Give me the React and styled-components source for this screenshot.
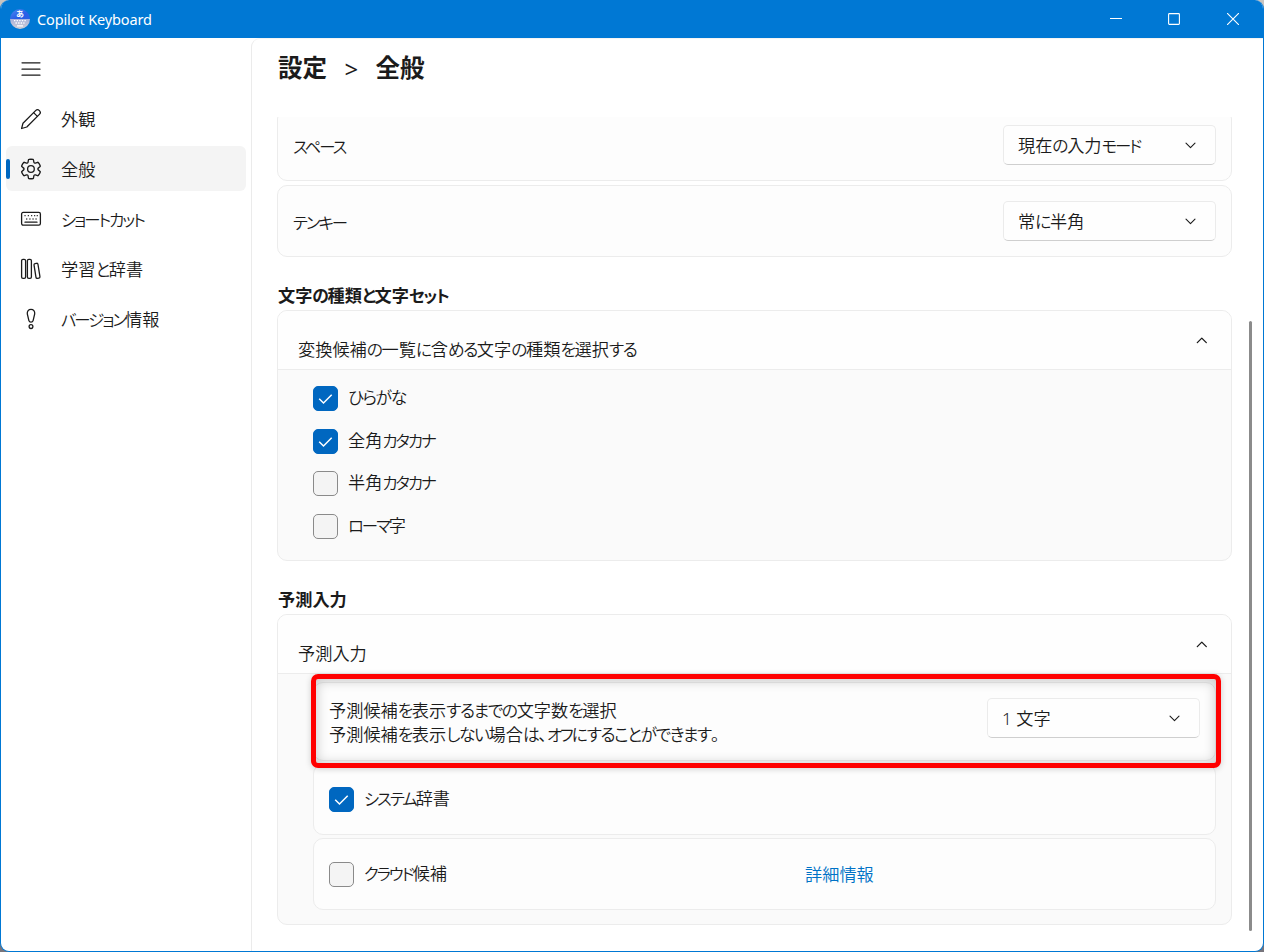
import React, { useState } from 'react';
import styled, { createGlobalStyle } from 'styled-components';

const GlobalStyle = createGlobalStyle`
  * {
    box-sizing: border-box;
  }

  body {
    margin: 0;
    background: linear-gradient(#c8c4c0 0%, #c8c4c0 50%, #5c5a78 50%, #77757c 100%);
    font-family: 'Noto Sans', 'Noto Sans CJK JP', sans-serif;
    color: #1b1b1b;
  }
`;

// --- WINDOW ---

const Window = styled.div`
  display: flex;
  flex-direction: column;
  width: 1264px;
  height: 952px;
  border: 1px solid #0078d4;
  border-top: none;
  border-radius: 9px;
  background: #fff;
  overflow: hidden;
`;

const TitleBar = styled.header`
  display: flex;
  align-items: center;
  flex: 0 0 38px;
  padding: 0 1px 0 8px;
  background: #0078d4;
  color: #fff;
`;

const AppTitle = styled.span`
  flex: 1;
  margin-left: 6px;
  font-family: 'Noto Sans', sans-serif;
  font-size: 14.5px;
  letter-spacing: -0.12px;
`;

const WindowButton = styled.button`
  display: flex;
  justify-content: center;
  align-items: center;
  width: 58.5px;
  height: 38px;
  padding: 0;
  border: none;
  background: none;
  color: #fff;
`;

const Body = styled.div`
  display: flex;
  flex: 1;
  min-height: 0;
`;

// --- SIDEBAR ---

const Sidebar = styled.nav`
  display: flex;
  flex-direction: column;
  gap: 5px;
  width: 250px;
  padding: 8px 5px 0;
`;

const NavItem = styled.div`
  display: flex;
  align-items: center;
  height: 45px;
  border-radius: 6px;
  background: ${props => (props.$active ? '#f4f4f4' : 'transparent')};
  cursor: pointer;

  &::before {
    content: '';
    width: 4px;
    height: 20px;
    border-radius: 2px;
    background: ${props => (props.$active ? '#0067c0' : 'transparent')};
  }
`;

const NavIcon = styled.span`
  display: flex;
  width: 22px;
  height: 22px;
  margin: 0 19px 0 10px;
`;

// --- CONTENT ---

const Main = styled.main`
  display: flex;
  flex-direction: column;
  flex: 1;
  padding-left: 25px;
  border-left: 1px solid #ebebeb;
  border-top: 1px solid #f4f4f4;
  border-top-left-radius: 9px;
`;

const Heading = styled.h1`
  display: flex;
  align-items: center;
  flex: 0 0 78px;
  margin: 0;
  padding: 0 0 24px 1px;
  font-size: 24.5px;
  font-weight: 700;
`;

const Separator = styled.span`
  width: 48.5px;
  padding-top: 5px;
  text-align: center;
  font-size: 24px;
  font-weight: 400;
`;

const ScrollRow = styled.div`
  display: flex;
  flex: 1;
  min-height: 0;
`;

const ScrollArea = styled.div`
  width: 955px;
  overflow: hidden;
`;

const ScrollThumb = styled.div`
  width: 3px;
  height: 610px;
  margin: 204px 0 0 17px;
  border-radius: 2px;
  background: #8b8b8b;
`;

const Card = styled.div`
  display: flex;
  justify-content: space-between;
  align-items: center;
  position: relative;
  height: ${props => props.$height || 72}px;
  margin-top: ${props => props.$top || 0}px;
  padding: 0 15px;
  border: 1px solid #ececec;
  border-radius: 10px;
  background: #fdfdfd;
`;

const RowLabel = styled.span`
  padding-top: 2px;
`;

const Group = styled.section`
  border: 1px solid #ececec;
  border-radius: 10px;
  background: #fafafa;
`;

const GroupTitle = styled.h2`
  display: flex;
  align-items: center;
  height: 25px;
  margin: ${props => props.$top}px 0 3px;
  padding-left: 1px;
`;

const GroupHeader = styled.div`
  display: flex;
  justify-content: space-between;
  align-items: center;
  height: 59px;
  padding: 0 23px 0 20px;
  border-bottom: 1px solid #ececec;
  border-radius: 9px 9px 0 0;
  background: #fefefe;
`;

const HeaderLabel = styled.span`
  padding-top: 17px;
`;

const CheckList = styled.div`
  display: flex;
  flex-direction: column;
  gap: 17.67px;
  height: 190px;
  padding: 16px 35px 0;
`;

const NestedCards = styled.div`
  display: flex;
  flex-direction: column;
  padding: 8px 15px 14px 35px;
`;

const CheckRow = styled.label`
  display: flex;
  align-items: center;
  gap: 10px;
  height: 25px;
  cursor: pointer;
`;

const CheckLabel = styled.span`
  padding-bottom: 3px;
`;

const Box = styled.span`
  display: flex;
  width: 25px;
  height: 25px;
  border: 1px solid ${props => (props.$checked ? '#0067c0' : '#8a8a8a')};
  border-radius: 5px;
  background: ${props => (props.$checked ? '#0067c0' : '#f4f4f4')};
`;

const SelectBox = styled.button`
  display: flex;
  justify-content: space-between;
  align-items: center;
  width: 213px;
  height: 40px;
  margin-bottom: ${props => props.$raise || 0}px;
  padding: 0 18px 1px 14px;
  border: 1px solid #ebebeb;
  border-bottom-color: #cfcfcf;
  border-radius: 5px;
  background: #fefefe;
  font-family: inherit;
  color: #1b1b1b;
`;

const Text = styled.span`
  display: inline-block;
  padding-top: 2px;
  font-size: 17.2px;
  line-height: 22px;
  white-space: pre;
  font-weight: ${props => (props.$bold ? 700 : 350)};
  font-feature-settings: 'palt';
`;

const Hiragana = styled.span`
  font-size: 16.8px;
  letter-spacing: -1.4px;
`;

const Katakana = styled.span`
  font-size: 16.4px;
  letter-spacing: ${props => (props.$bold ? -1.2 : -2)}px;
`;

const Lines = styled.div`
  display: flex;
  flex-direction: column;
`;

const DetailLink = styled.a`
  width: 395px;
  color: #0072c6;
`;

const Highlight = styled.div`
  position: absolute;
  top: -9px;
  left: -3px;
  width: 910px;
  height: 94px;
  z-index: 1;
  border: 5px solid #f00;
  border-radius: 7px;
  box-shadow: 0 1px 6px rgba(0, 0, 0, 0.18), inset 0 1px 12px 1px rgba(0, 0, 0, 0.2);
  pointer-events: none;
`;

// --- ICONS ---

const Icon = ({ size = 22, children, width = 1.3 }) => (
  <svg
    width={size}
    height={size}
    viewBox={`0 0 ${size} ${size}`}
    fill="none"
    stroke="currentColor"
    strokeWidth={width}
    strokeLinecap="round"
    strokeLinejoin="round"
  >
    {children}
  </svg>
);

const AppLogo = () => (
  <svg width="22" height="22" viewBox="0 0 22 22">
    <defs>
      <linearGradient id="sky" x1="0" y1="0" x2="1" y2="1">
        <stop offset="0" stopColor="#4c8df0" />
        <stop offset="0.6" stopColor="#2a5fe6" />
      </linearGradient>
      <linearGradient id="keys" x1="0" y1="0" x2="0" y2="1">
        <stop offset="0" stopColor="#a9b2dc" />
        <stop offset="1" stopColor="#d0cdd4" />
      </linearGradient>
    </defs>
    <path d="M1 11a10 10 0 0 1 20 0z" fill="url(#sky)" />
    <path d="M1 11a10 10 0 0 0 20 0z" fill="url(#keys)" />
    <text x="11" y="9.4" fontSize="8" fontWeight="700" textAnchor="middle" fill="#fff" fontFamily="Noto Sans CJK JP, sans-serif">あ</text>
    <path d="M5 12.6h12M6.5 15h9" stroke="#fff" strokeWidth="1.3" strokeDasharray="1.4 1.2" />
    <path d="M8 17.8h6" stroke="#fff" strokeWidth="1.3" />
  </svg>
);

const MenuIcon = () => (
  <Icon width={1.2}>
    <path d="M2 4.8h18M2 11.2h18M2 17.2h18" />
  </Icon>
);

const PenIcon = () => (
  <Icon>
    <path d="M1.6 20.5l1.4-5.3L15.6 2.6a2.6 2.6 0 0 1 3.8 3.8L6.8 19l-5.2 1.5z" />
    <path d="M13.6 4.6l3.8 3.8" />
  </Icon>
);

const GearIcon = () => (
  <Icon>
    <g transform="translate(-0.55 -0.5) scale(1.15)" strokeWidth="1.15">
      <path d="M1.91 7.38A8.5 8.5 0 0 1 3.7 4.3a.5.5 0 0 1 .54-.13l1.92.68a1 1 0 0 0 1.32-.76l.36-2a.5.5 0 0 1 .4-.4 8.53 8.53 0 0 1 3.55 0c.2.04.35.2.38.4l.37 2a1 1 0 0 0 1.32.76l1.92-.68a.5.5 0 0 1 .54.13 8.5 8.5 0 0 1 1.78 3.08c.06.2 0 .4-.15.54l-1.56 1.32a1 1 0 0 0 0 1.52l1.56 1.32a.5.5 0 0 1 .15.54 8.5 8.5 0 0 1-1.78 3.08.5.5 0 0 1-.54.13l-1.92-.68a1 1 0 0 0-1.32.76l-.37 2a.5.5 0 0 1-.38.4 8.53 8.53 0 0 1-3.56 0 .5.5 0 0 1-.39-.4l-.36-2a1 1 0 0 0-1.32-.76l-1.92.68a.5.5 0 0 1-.54-.13 8.5 8.5 0 0 1-1.78-3.08.5.5 0 0 1 .15-.54l1.56-1.32a1 1 0 0 0 0-1.52L2.06 7.92a.5.5 0 0 1-.15-.54z" />
      <circle cx="10" cy="10" r="2.9" />
    </g>
  </Icon>
);

const KeyboardIcon = () => (
  <Icon>
    <rect x="1.6" y="4.4" width="18.8" height="12.8" rx="1.6" />
    <path d="M5 7.7h.1M8.3 7.7h.1M11.6 7.7h.1M14.6 7.7h.1M17.2 7.7h.1M6.7 11h.1M9.9 11h.1M13 11h.1M16 11h.1M5 14.2h12" />
  </Icon>
);

const BooksIcon = () => (
  <Icon>
    <rect x="1.6" y="1.4" width="4" height="19" rx="1.4" />
    <rect x="7.4" y="1.4" width="4" height="19" rx="1.4" />
    <rect x="15" y="5.3" width="4" height="15" rx="1.2" transform="rotate(-9 17 13)" />
  </Icon>
);

const AlertIcon = () => (
  <Icon>
    <path d="M11 1.4c-2.5 0-4 1.9-3.7 4.4l1.6 6.9c.5 2 3.7 2 4.2 0l1.6-6.9c.3-2.5-1.2-4.4-3.7-4.4z" />
    <circle cx="11" cy="18.6" r="1.9" />
  </Icon>
);

const ChevronIcon = ({ up }) => (
  <Icon size={12} width={up ? 1.3 : 1.1}>
    <path d={up ? 'M1.3 8.6L5.8 4.1l4.5 4.5' : 'M1 4.2l4.5 4.5L10 4.2'} />
  </Icon>
);

// --- PARTS ---

// Kana runs are set tighter than kanji, as in a UI font
const Label = ({ children, bold }) => (
  <Text $bold={bold}>
    {children.split(/([\u3041-\u309f]+|[\u30a0-\u30ff]+)/).map((run, i) => {
      if (i % 2 === 0) return run;
      return run < '\u30a0'
        ? <Hiragana key={i}>{run}</Hiragana>
        : <Katakana key={i} $bold={bold}>{run}</Katakana>;
    })}
  </Text>
);

const Select = ({ value, raise }) => (
  <SelectBox $raise={raise}>
    <Label>{value}</Label>
    <ChevronIcon />
  </SelectBox>
);

const Checkbox = ({ label, defaultChecked }) => {
  const [checked, setChecked] = useState(!!defaultChecked);

  return (
    <CheckRow onClick={() => setChecked(!checked)}>
      <Box $checked={checked}>
        {checked && (
          <svg width="23" height="23" viewBox="1 1 23 23" fill="none" stroke="#fff" strokeWidth="1.5">
            <path d="M6.2 12.8l4.3 4.2 8.2-8.2" />
          </svg>
        )}
      </Box>
      <CheckLabel><Label>{label}</Label></CheckLabel>
    </CheckRow>
  );
};

const navItems = [
  { id: 'look', label: '外観', icon: <PenIcon /> },
  { id: 'general', label: '全般', icon: <GearIcon /> },
  { id: 'shortcut', label: 'ショートカット', icon: <KeyboardIcon /> },
  { id: 'dictionary', label: '学習と辞書', icon: <BooksIcon /> },
  { id: 'version', label: 'バージョン情報', icon: <AlertIcon /> },
];

function App() {
  const [page, setPage] = useState('general');

  return (
    <>
      <GlobalStyle />
      <Window>
        <TitleBar>
          <AppLogo />
          <AppTitle>Copilot Keyboard</AppTitle>
          <WindowButton>
            <Icon size={12} width={1}><path d="M0 5.5h12" /></Icon>
          </WindowButton>
          <WindowButton>
            <Icon size={12} width={1.1}><rect x="0.6" y="0.6" width="10.8" height="10.8" rx="0.8" /></Icon>
          </WindowButton>
          <WindowButton>
            <Icon size={12} width={1.1}><path d="M0.4 0.4l11.2 11.2M11.6 0.4L0.4 11.6" /></Icon>
          </WindowButton>
        </TitleBar>

        <Body>
          <Sidebar>
            <NavItem>
              <NavIcon><MenuIcon /></NavIcon>
            </NavItem>
            {navItems.map(item => (
              <NavItem key={item.id} $active={page === item.id} onClick={() => setPage(item.id)}>
                <NavIcon>{item.icon}</NavIcon>
                <Label>{item.label}</Label>
              </NavItem>
            ))}
          </Sidebar>

          <Main>
            <Heading>
              設定<Separator>&gt;</Separator>全般
            </Heading>

            <ScrollRow>
              <ScrollArea>
                <Card $top={-8}>
                  <RowLabel><Label>スペース</Label></RowLabel>
                  <Select value="現在の入力モード" />
                </Card>
                <Card $top={4}>
                  <RowLabel><Label>テンキー</Label></RowLabel>
                  <Select value="常に半角" />
                </Card>

                <GroupTitle $top={25}><Label bold>文字の種類と文字セット</Label></GroupTitle>
                <Group>
                  <GroupHeader>
                    <HeaderLabel><Label>変換候補の一覧に含める文字の種類を選択する</Label></HeaderLabel>
                    <ChevronIcon up />
                  </GroupHeader>
                  <CheckList>
                    <Checkbox label="ひらがな" defaultChecked />
                    <Checkbox label="全角カタカナ" defaultChecked />
                    <Checkbox label="半角カタカナ" />
                    <Checkbox label="ローマ字" />
                  </CheckList>
                </Group>

                <GroupTitle $top={25}><Label bold>予測入力</Label></GroupTitle>
                <Group>
                  <GroupHeader>
                    <HeaderLabel><Label>予測入力</Label></HeaderLabel>
                    <ChevronIcon up />
                  </GroupHeader>
                  <NestedCards>
                    <Card $height={79}>
                      <Lines>
                        <Label>予測候補を表示するまでの文字数を選択</Label>
                        <Label>予測候補を表示しない場合は、オフにすることができます。</Label>
                      </Lines>
                      <Select value="1 文字" raise={7} />
                      <Highlight />
                    </Card>
                    <Card $height={71} $top={3}>
                      <Checkbox label="システム辞書" defaultChecked />
                    </Card>
                    <Card $top={3}>
                      <Checkbox label="クラウド候補" />
                      <DetailLink><Label>詳細情報</Label></DetailLink>
                    </Card>
                  </NestedCards>
                </Group>
              </ScrollArea>
              <ScrollThumb />
            </ScrollRow>
          </Main>
        </Body>
      </Window>
    </>
  );
}

export default App;
